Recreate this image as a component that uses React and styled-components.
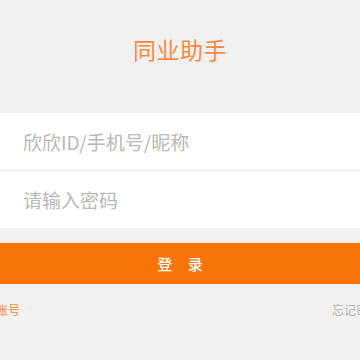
import React from "react";
import styled, { createGlobalStyle } from "styled-components";

const Global = createGlobalStyle`
  html, body { margin: 0; padding: 0; background: #f1f1f1; }
  body { font-family: "Noto Sans CJK SC", "Noto Sans", sans-serif; }
  * { box-sizing: border-box; }
`;

const Page = styled.div`
  width: 360px;
  height: 360px;
  overflow: hidden;
  background: #f1f1f1;
  display: flex;
  flex-direction: column;
`;

const Title = styled.h1`
  margin: 38px 0 0;
  font-size: 23px;
  line-height: 23px;
  font-weight: 400;
  color: #f68a44;
  text-align: center;
  letter-spacing: 0.5px;
`;

const Form = styled.div`
  margin-top: 52px;
  background: #fff;
  display: flex;
  flex-direction: column;
`;

const Field = styled.input`
  display: block;
  width: 100%;
  height: 57px;
  border: none;
  outline: none;
  background: transparent;
  padding: 0 0 0 23px;
  font-family: "Noto Sans CJK SC", sans-serif;
  font-size: 19px;
  color: #333;
  &::placeholder { color: #b8b8b8; }
`;

const Divider = styled.div`
  height: 1px;
  background: #eeeeee;
`;

const LoginButton = styled.button`
  margin-top: 15px;
  height: 41px;
  width: 100%;
  border: none;
  background: #f77406;
  color: #fff;
  font-family: "Noto Sans CJK SC", sans-serif;
  font-size: 15px;
  font-weight: 500;
  word-spacing: 12px;
  padding: 0;
  display: flex;
  align-items: center;
  justify-content: center;
`;

const Links = styled.div`
  margin: 20px -20px 0 -28px;
  display: flex;
  justify-content: space-between;
  font-size: 12px;
  line-height: 12px;
`;

const LinkText = styled.span`
  color: ${(p) => (p.$accent ? "#f68a44" : "#b3b3b3")};
`;

export default function App() {
  return (
    <Page>
      <Global />
      <Title>同业助手</Title>
      <Form>
        <Field placeholder="欣欣ID/手机号/昵称" />
        <Divider />
        <Field type="password" placeholder="请输入密码" />
      </Form>
      <LoginButton>登 录</LoginButton>
      <Links>
        <LinkText $accent>注册账号</LinkText>
        <LinkText>忘记密码</LinkText>
      </Links>
    </Page>
  );
}
